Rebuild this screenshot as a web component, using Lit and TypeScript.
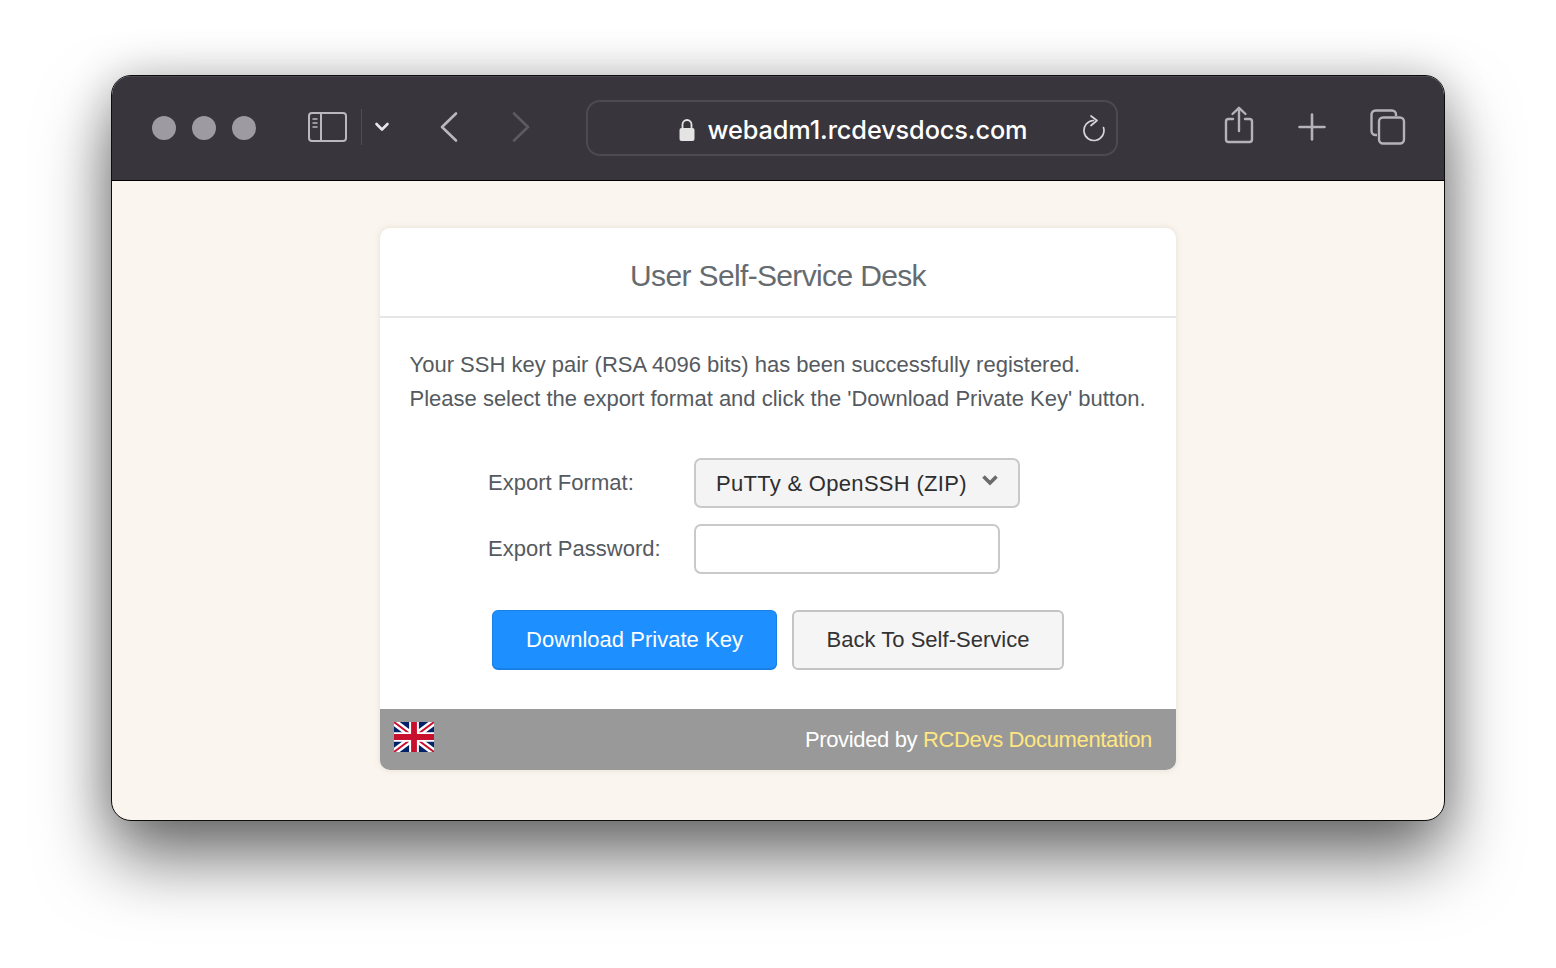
import { LitElement, html, css } from "lit";
import { customElement } from "lit/decorators.js";

@customElement("app-root")
export class AppRoot extends LitElement {
  static styles = css`
    :host { display: block; height: 968px; background: #fff; overflow: hidden; font-family: "Liberation Sans", Arial, sans-serif; }
    .stage { padding: 75px 111px 0; }
    .window { height: 746px; box-sizing: border-box; border: 1px solid #0c0c0e; border-radius: 20px; background: #faf5ef; overflow: hidden; box-shadow: 0 38px 70px rgba(0,0,0,.55), 0 0 45px rgba(0,0,0,.2); display: flex; flex-direction: column; }
    .toolbar { height: 105px; box-sizing: border-box; flex: none; background: #38353c; border-bottom: 1px solid #000; display: flex; align-items: center; padding: 0 0 4px 40px; border-top: 1px solid #4a474e; position: relative; }
    .dots { display: flex; gap: 16px; margin-top: 2px; }
    .dot { width: 24px; height: 24px; border-radius: 50%; background: #9d9aa1; }
    svg { display: block; flex: none; }
    .side { margin-left: 51px; }
    .sep { width: 1px; height: 36px; background: #504d54; margin-left: 13px; }
    .chev { margin-left: 12px; }
    .back { margin-left: 49px; }
    .fwd { margin-left: 52px; }
    .url { margin: 2px 0 0 55px; width: 532px; height: 56px; box-sizing: border-box; border: 2px solid #4d4a51; border-radius: 14px; display: flex; align-items: center; justify-content: center; position: relative; color: #fff; font: 500 25.300px Inter, "Liberation Sans", sans-serif; letter-spacing: -.1px; }
    .url-in { display: flex; align-items: center; gap: 13px; margin: 4px 0 0 2px; }
    .reload { position: absolute; right: 10px; top: 12px; }
    .share { margin: -3px 0 0 106px; }
    .plus { margin-left: 44px; }
    .tabs { margin-left: 44px; }
    .content { flex: 1; display: flex; justify-content: center; padding-top: 47px; }
    .card { width: 796px; height: 542px; background: #fff; border-radius: 10px; overflow: hidden; box-shadow: 0 0 6px rgba(160,140,110,.22); display: flex; flex-direction: column; color: #555a60; }
    .head { height: 90px; box-sizing: border-box; flex: none; border-bottom: 2px solid #e6e6e6; display: flex; align-items: center; justify-content: center; font-size: 30px; letter-spacing: -.65px; color: #666b70; padding-top: 7px; }
    .body { flex: 1; padding: 30px 0 0 29.500px; font-size: 22px; }
    .msg { line-height: 34px; white-space: nowrap; letter-spacing: 0; }
    .form { margin: 42px 0 0 78.500px; display: grid; grid-template-columns: 206px auto; row-gap: 16px; justify-content: start; align-items: center; letter-spacing: .02px; }
    .select { width: 326px; height: 50px; box-sizing: border-box; border: 2px solid #c9c9c9; border-radius: 7px; background: #f4f4f4; color: #2e2e2e; font: 22px "Liberation Sans", Arial, sans-serif; letter-spacing: .3px; white-space: nowrap; display: flex; align-items: center; justify-content: space-between; padding: 2px 20px 0 20px; }
    .input { width: 306px; height: 50px; box-sizing: border-box; border: 2px solid #c9c9c9; border-radius: 7px; background: #fff; display: block; padding: 0; margin: 0; outline: none; }
    .caret { margin-top: -9px; }
    .buttons { display: flex; gap: 15px; margin: 36px 0 0 82.500px; }
    .btn { height: 60px; box-sizing: border-box; border-radius: 6px; font: 22px "Liberation Sans", Arial, sans-serif; letter-spacing: .02px; display: flex; align-items: center; justify-content: center; padding: 0; }
    .primary { width: 285px; background: #1e8fff; color: #fff; border: 1px solid #177fe6; border-bottom-width: 2px; }
    .secondary { width: 272px; background: #f5f5f5; color: #333; border: 2px solid #c4c4c4; }
    .foot { height: 61px; flex: none; background: #999; display: flex; align-items: center; justify-content: space-between; padding: 0 24px 0 14px; color: #fff; font-size: 22px; letter-spacing: -.35px; }
    .foot svg { margin-top: -5px; }
    .foot-text { margin-top: 1px; }
    .foot-text span { color: #ffe680; }
  `;

  render() {
    return html`<div class="stage"><div class="window">
      <div class="toolbar">
        <div class="dots"><div class="dot"></div><div class="dot"></div><div class="dot"></div></div>
        <svg class="side" width="41" height="32" viewBox="0 0 41 32" fill="none" stroke="#bab7bd" stroke-width="2"><rect x="2" y="2" width="37" height="28" rx="3"/><path d="M14 2v28"/><path d="M5.500 8h5M5.500 12h5M5.500 16h5" stroke-width="1.600"/></svg>
        <div class="sep"></div>
        <svg class="chev" width="16" height="12" viewBox="0 0 16 12" fill="none" stroke="#e8e6ea" stroke-width="2.600" stroke-linecap="round" stroke-linejoin="round"><path d="M2.500 3l5.500 5.500L13.500 3"/></svg>
        <svg class="back" width="20" height="32" viewBox="0 0 20 32" fill="none" stroke="#bab7bd" stroke-width="2.600" stroke-linecap="round" stroke-linejoin="round"><path d="M17 2.500L3 16l14 13.500"/></svg>
        <svg class="fwd" width="20" height="32" viewBox="0 0 20 32" fill="none" stroke="#5d5a61" stroke-width="2.600" stroke-linecap="round" stroke-linejoin="round"><path d="M3 2.500L17 16 3 29.500"/></svg>
        <div class="url">
          <div class="url-in">
            <svg width="16" height="24" viewBox="0 0 16 24"><path d="M3.500 11V6.500a4.500 4.500 0 0 1 9 0V11" fill="none" stroke="#e4e4e4" stroke-width="1.800"/><rect x="0.500" y="10" width="15" height="13" rx="2" fill="#e4e4e4"/></svg>
            <span>webadm1.rcdevsdocs.com</span>
          </div>
          <svg class="reload" width="24" height="28" viewBox="0 0 24 28" fill="none" stroke="#d6d4d8" stroke-width="1.700" stroke-linecap="round" stroke-linejoin="round"><path d="M11.500 6.500A10 10 0 1 0 21.500 13.500"/><path d="M9 2l6 4.500-6 5"/></svg>
        </div>
        <svg class="share" width="30" height="38" viewBox="0 0 30 38" fill="none" stroke="#b5b2b9" stroke-width="2.400" stroke-linecap="round" stroke-linejoin="round"><path d="M9 13H4.500A2.500 2.500 0 0 0 2 15.500v18A2.500 2.500 0 0 0 4.500 36h21a2.500 2.500 0 0 0 2.500-2.500v-18a2.500 2.500 0 0 0-2.500-2.500H21"/><path d="M15 25V2M8.500 8L15 1.800 21.500 8"/></svg>
        <svg class="plus" width="28" height="28" viewBox="0 0 28 28" fill="none" stroke="#b5b2b9" stroke-width="2.600" stroke-linecap="round"><path d="M14 1.500v25M1.500 14h25"/></svg>
        <svg class="tabs" width="36" height="36" viewBox="0 0 36 36" fill="none" stroke="#b5b2b9" stroke-width="2.400" stroke-linejoin="round"><path d="M7 26H5.500A4 4 0 0 1 1.500 22V5.500a4 4 0 0 1 4-4H22a4 4 0 0 1 4 4V7"/><rect x="9" y="8.500" width="25" height="26" rx="4"/></svg>
      </div>
      <div class="content">
        <div class="card">
          <div class="head">User Self-Service Desk</div>
          <div class="body">
            <div class="msg">Your SSH key pair (RSA 4096 bits) has been successfully registered.<br>Please select the export format and click the 'Download Private Key' button.</div>
            <div class="form">
              <div>Export Format:</div>
              <div class="select"><span>PuTTy &amp; OpenSSH (ZIP)</span>
                <svg class="caret" width="16" height="12" viewBox="0 0 16 12" fill="none" stroke="#6b6b6b" stroke-width="3.600" stroke-linejoin="miter"><path d="M1.500 2.500L8 9l6.500-6.500"/></svg>
              </div>
              <div>Export Password:</div>
              <input class="input" type="password" />
            </div>
            <div class="buttons">
              <div class="btn primary">Download Private Key</div>
              <div class="btn secondary">Back To Self-Service</div>
            </div>
          </div>
          <div class="foot">
            <svg width="40" height="30" viewBox="0 0 41 31" preserveAspectRatio="none"><rect width="41" height="31" fill="#012169"/><path d="M0 0L41 31M41 0L0 31" stroke="#fff" stroke-width="7"/><path d="M0 0L41 31M41 0L0 31" stroke="#c8102e" stroke-width="2"/><path d="M20.500 0v31M0 15.500h41" stroke="#fff" stroke-width="10"/><path d="M20.500 0v31M0 15.500h41" stroke="#c8102e" stroke-width="6"/></svg>
            <div class="foot-text">Provided by <span>RCDevs Documentation</span></div>
          </div>
        </div>
      </div>
    </div></div>`;
  }
}
